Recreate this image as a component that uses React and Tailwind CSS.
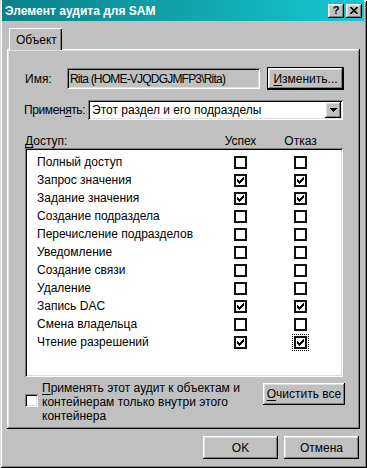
import React from 'react';

// Win2k bevels
const raised = 'shadow-[inset_-1px_-1px_0_#000,inset_1px_1px_0_#fff,inset_-2px_-2px_0_#808080,inset_2px_2px_0_#dfdfdf]';
const sunken = 'shadow-[inset_1px_1px_0_#808080,inset_-1px_-1px_0_#fff,inset_2px_2px_0_#000,inset_-2px_-2px_0_#dfdfdf]';

const rows = [
  { label: 'Полный доступ', ok: false, fail: false },
  { label: 'Запрос значения', ok: true, fail: true },
  { label: 'Задание значения', ok: true, fail: true },
  { label: 'Создание подраздела', ok: false, fail: false },
  { label: 'Перечисление подразделов', ok: false, fail: false },
  { label: 'Уведомление', ok: false, fail: false },
  { label: 'Создание связи', ok: false, fail: false },
  { label: 'Удаление', ok: false, fail: false },
  { label: 'Запись DAC', ok: true, fail: true },
  { label: 'Смена владельца', ok: false, fail: false },
  { label: 'Чтение разрешений', ok: true, fail: true, focus: true },
];

const Tick = () => (
  <svg width="7" height="7" viewBox="0 0 7 7" shapeRendering="crispEdges">
    <polygon points="0,2 2,4 7,-1 7,2 2,7 0,5" fill="#000" />
  </svg>
);

const ListCheck = ({ checked, focus }) => (
  <span className={focus ? 'flex p-px outline-1 outline-dotted outline-black' : 'flex p-px'}>
    <span className="flex h-[13px] w-[13px] items-center justify-center border-2 border-[#111] bg-white">
      {checked && <Tick />}
    </span>
  </span>
);

const Button = ({ children, className = '' }) => (
  <div className={`flex items-center justify-center bg-[#c0c0c0] ${raised} ${className}`}>{children}</div>
);

export default function App() {
  return (
    <div
      className="relative flex h-[468px] w-[367px] flex-col bg-[#c0c0c0] text-[12px] text-black shadow-[inset_1px_1px_0_#dfdfdf,inset_-1px_-1px_0_#000,inset_2px_2px_0_#fff,inset_-2px_-2px_0_#808080]"
      style={{ fontFamily: '"Liberation Sans", Arial, sans-serif' }}
    >
      {/* title bar */}
      <div className="ml-[2px] mr-[3px] flex h-[21px] items-center bg-linear-to-r from-[#0a8088] to-[#16c8d1] pl-[3px] pr-[2px]">
        <span className="text-[12px] font-bold text-white">Элемент аудита для SAM</span>
        <div className="ml-auto flex gap-[2px]">
          <Button className="h-[14px] w-[16px]">
            <span className="text-[11px] font-bold leading-none">?</span>
          </Button>
          <Button className="h-[14px] w-[16px]">
            <svg width="8" height="7" viewBox="0 0 8 7">
              <path d="M0.5 0 L7.5 7 M7.5 0 L0.5 7" stroke="#000" strokeWidth="1.6" />
            </svg>
          </Button>
        </div>
      </div>

      <div className="flex flex-col px-[7px] pt-[7px]">
        {/* tab */}
        <div className="relative z-10 -mb-px ml-[2px] flex h-[22px] w-[53px] items-center bg-[#c0c0c0] pl-[7px] shadow-[inset_1px_1px_0_#fff,inset_-1px_0_0_#000,inset_-2px_0_0_#808080]">
          <span className="mt-[2px]">Объект</span>
        </div>

        {/* panel */}
        <div className={`flex h-[380px] flex-col pl-[18px] pr-[15px] ${raised}`}>
          <div className="mt-[19px] flex h-[21px] items-center">
            <span className="w-[42px]">Имя:</span>
            <div className={`flex h-[21px] w-[193px] items-center pl-[3px] tracking-[-0.8px] ${sunken}`}>Rita (HOME-VJQDGJMFP3\Rita)</div>
            <Button className="ml-[8px] h-[21px] w-[75px] outline-1 outline-black">
              <span><span className="underline underline-offset-2">И</span>зменить...</span>
            </Button>
          </div>

          <div className="mt-[11px] flex h-[20px] items-center">
            <span className="-ml-px w-[64px] tracking-[-0.4px]">Примен<span className="underline underline-offset-2">я</span>ть:</span>
            <div className={`flex h-[20px] w-[255px] items-center bg-white pl-[4px] pr-[2px] ${sunken}`}>
              <span>Этот раздел и его подразделы</span>
              <Button className="ml-auto h-[16px] w-[16px]">
                <svg width="7" height="4" viewBox="0 0 7 4" shapeRendering="crispEdges">
                  <polygon points="0,0 7,0 3.5,4" fill="#000" />
                </svg>
              </Button>
            </div>
          </div>

          <div className="mt-[15px] flex h-[13px] items-center leading-[13px]">
            <span className="w-[197px]"><span className="underline underline-offset-2">Д</span>оступ:</span>
            <span className="w-[37px] text-center">Успех</span>
            <span className="ml-[23px] w-[37px] text-center">Отказ</span>
          </div>

          <div className={`flex h-[229px] w-[318px] flex-col bg-white pt-[5px] ${sunken}`}>
            {rows.map((r) => (
              <div key={r.label} className="flex h-[18px] items-center">
                <span className="w-[208px] pl-[12px]">{r.label}</span>
                <ListCheck checked={r.ok} />
                <span className="w-[45px]" />
                <ListCheck checked={r.fail} focus={r.focus} />
              </div>
            ))}
          </div>

          <div className="mt-[4px] flex">
            <span className={`mt-[13px] h-[13px] w-[13px] bg-white ${sunken}`} />
            <p className="ml-[4px] leading-[14px]">
              <span className="underline underline-offset-2">П</span>рименять этот аудит к объектам и
              <br />
              контейнерам только внутри этого
              <br />
              контейнера
            </p>
            <Button className="ml-auto mt-[2px] h-[22px] w-[82px]">
              <span><span className="underline underline-offset-2">О</span>чистить все</span>
            </Button>
          </div>
        </div>

        {/* footer */}
        <div className="mt-[7px] flex justify-end gap-[6px] pr-px">
          <Button className="h-[23px] w-[75px]">OK</Button>
          <Button className="h-[23px] w-[75px]">Отмена</Button>
        </div>
      </div>
    </div>
  );
}
